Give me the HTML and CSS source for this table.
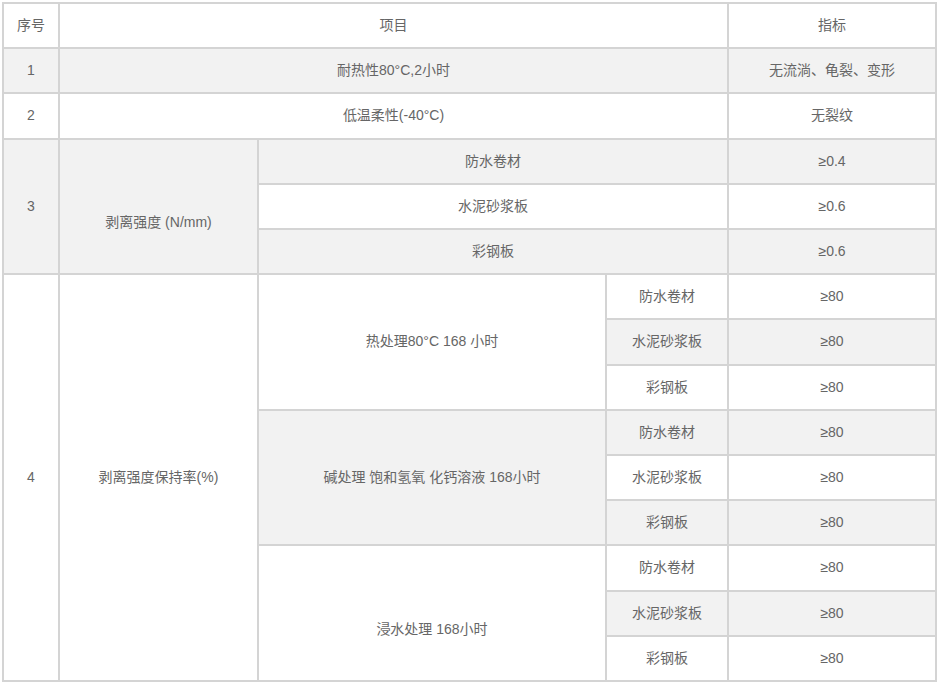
FILE: index.html
```html
<!DOCTYPE html>
<html lang="zh">
<head>
<meta charset="utf-8">
<title>技术指标</title>
<link rel="stylesheet" href="styles.css">
</head>
<body>
<table class="spec">
  <colgroup>
    <col class="c1"><col class="c2"><col class="c3"><col class="c4"><col class="c5">
  </colgroup>
  <tbody>
    <tr><td>序号</td><td colspan="3">项目</td><td>指标</td></tr>
    <tr><td>1</td><td colspan="3">耐热性80°C,2小时</td><td>无流淌、龟裂、变形</td></tr>
    <tr><td>2</td><td colspan="3">低温柔性(-40°C)</td><td>无裂纹</td></tr>
    <tr><td rowspan="3">3</td><td rowspan="3" class="shift">剥离强度 (N/mm)</td><td colspan="2">防水卷材</td><td>≥0.4</td></tr>
    <tr><td colspan="2">水泥砂浆板</td><td>≥0.6</td></tr>
    <tr><td colspan="2">彩钢板</td><td>≥0.6</td></tr>
    <tr><td rowspan="9">4</td><td rowspan="9">剥离强度保持率(%)</td><td rowspan="3">热处理80°C 168 小时</td><td>防水卷材</td><td>≥80</td></tr>
    <tr><td>水泥砂浆板</td><td>≥80</td></tr>
    <tr><td>彩钢板</td><td>≥80</td></tr>
    <tr><td rowspan="3">碱处理 饱和氢氧 化钙溶液 168小时</td><td>防水卷材</td><td>≥80</td></tr>
    <tr><td>水泥砂浆板</td><td>≥80</td></tr>
    <tr><td>彩钢板</td><td>≥80</td></tr>
    <tr><td rowspan="3" class="shift">浸水处理 168小时</td><td>防水卷材</td><td>≥80</td></tr>
    <tr><td>水泥砂浆板</td><td>≥80</td></tr>
    <tr><td>彩钢板</td><td>≥80</td></tr>
  </tbody>
</table>
</body>
</html>
```
FILE: styles.css
```css
html, body {
  margin: 0;
  padding: 0;
  background: #fff;
}
body {
  padding: 2px;
  font-family: "Liberation Sans", Arial, "Noto Sans CJK SC", sans-serif;
  font-size: 14px;
  color: #666;
}
.spec {
  table-layout: fixed;
  width: 935px;
  border-collapse: separate;
  border-spacing: 0;
  border: 1px solid #d4d4d4;
}
.spec .c1 { width: 56px; }
.spec .c2 { width: 199px; }
.spec .c3 { width: 348px; }
.spec .c4 { width: 122px; }
.spec .c5 { width: 208px; }
.spec td {
  border: 1px solid #d4d4d4;
  padding: 11px 4px;
  line-height: 21.2px;
  text-align: center;
  vertical-align: middle;
  box-sizing: border-box;
}
.spec tr:nth-child(even) td {
  background: #f2f2f2;
}
.spec td.shift {
  padding-top: 43px;
}
```
